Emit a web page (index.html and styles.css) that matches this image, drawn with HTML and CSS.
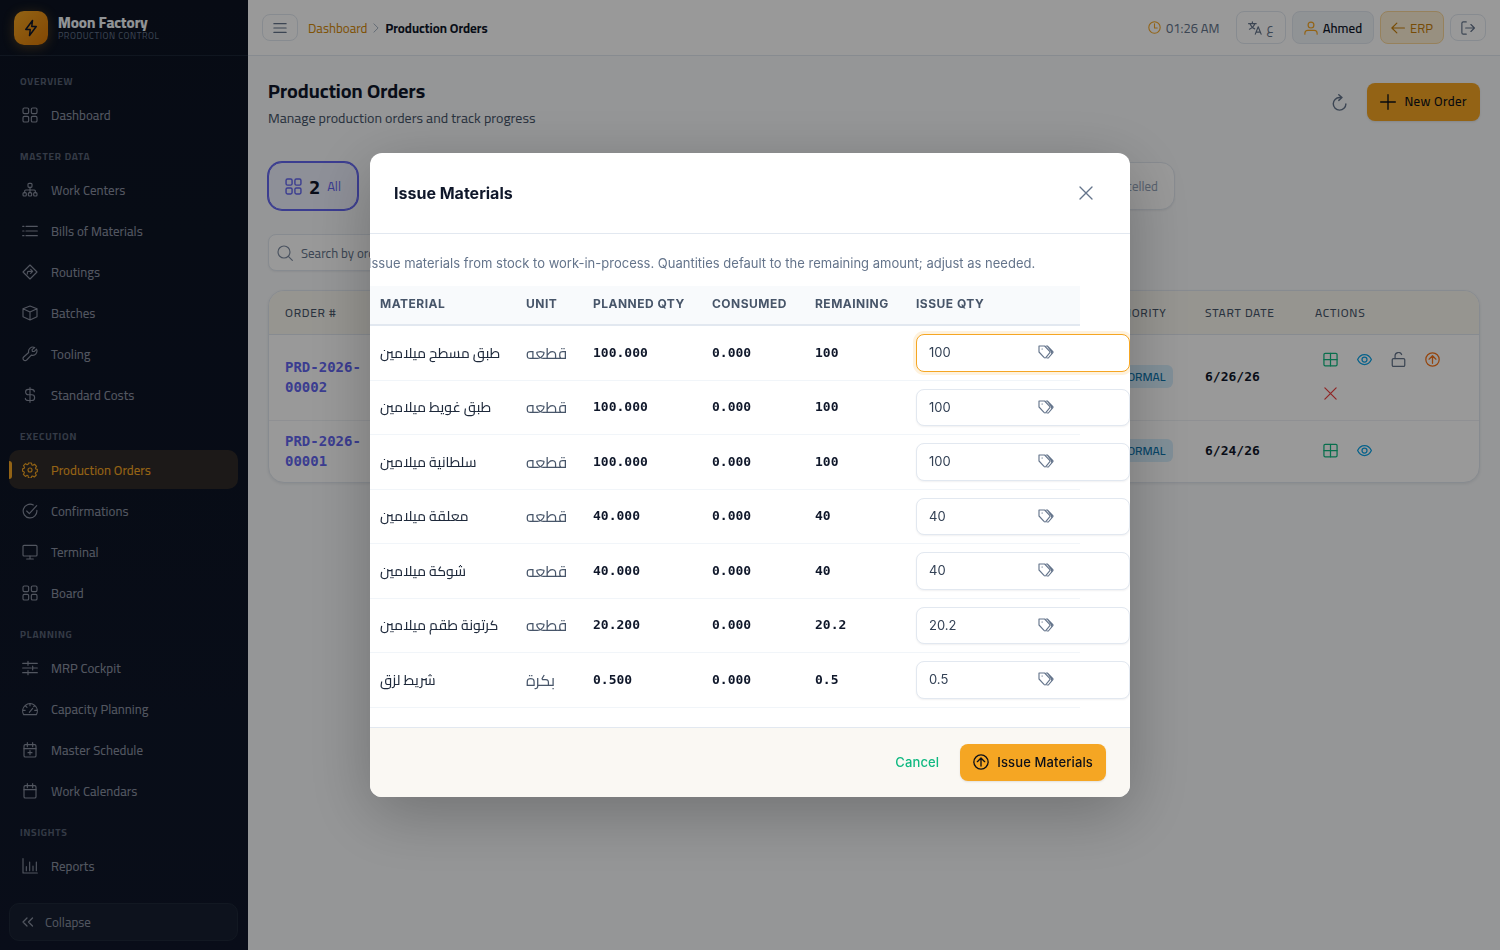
FILE: index.html
```html
<!DOCTYPE html>
<html lang="en">
<head>
    <meta charset="UTF-8">
    <meta name="viewport" content="width=device-width, initial-scale=1.0">
    <title>Production Orders - Moon Factory</title>
    <link rel="stylesheet" href="styles.css">
</head>
<body>
    <!-- Icon sprite -->
    <svg class="sprite" aria-hidden="true">
        <symbol id="i-grid" viewBox="0 0 24 24"><rect x="1.500" y="1.500" width="8.500" height="8.500" rx="2"/><rect x="14" y="1.500" width="8.500" height="8.500" rx="2"/><rect x="1.500" y="14" width="8.500" height="8.500" rx="2"/><rect x="14" y="14" width="8.500" height="8.500" rx="2"/></symbol>
        <symbol id="i-bolt" viewBox="0 0 24 24"><path d="M14 2 5 14h6l-1 8 9-12h-6z"/></symbol>
        <symbol id="i-sitemap" viewBox="0 0 24 24"><rect x="9" y="2" width="6" height="6" rx="1.5"/><path d="M12 8v8M4 16v-2.500q0-1.500 1.500-1.500h13q1.500 0 1.500 1.500V16"/><rect x="1.500" y="16" width="5" height="5" rx="1.500"/><rect x="9.500" y="16" width="5" height="5" rx="1.500"/><rect x="17.500" y="16" width="5" height="5" rx="1.500"/></symbol>
        <symbol id="i-list" viewBox="0 0 24 24"><path d="M6 5h17M6 12h17M6 19h17M1 5h2M1 12h2M1 19h2"/></symbol>
        <symbol id="i-route" viewBox="0 0 24 24"><path d="M12 1.500 22.500 12 12 22.500 1.500 12zM8 15v-2q0-2 2-2h6M13 8l3 3-3 3"/></symbol>
        <symbol id="i-box" viewBox="0 0 24 24"><path d="M12 1.500 22.500 5.500v12L12 22.500 1.500 17.500v-12zM1.500 5.500 12 10.500l10.500-5M12 10.500v12"/></symbol>
        <symbol id="i-wrench" viewBox="0 0 24 24"><path d="M19 2.200a6.500 6.500 0 0 0-9 7.500L2.500 16.500a3 3 0 0 0 0 4.500 3 3 0 0 0 4.500 0l7-7.300a6.500 6.500 0 0 0 7.800-9L18.200 8.300 15.500 8l-.4-2.500z"/></symbol>
        <symbol id="i-dollar" viewBox="0 0 24 24"><path d="M12 1v22M18.500 7c0-2.500-2-3.500-4.500-3.500h-4.500a4 4 0 0 0 0 8.200h5.200a4.200 4.200 0 0 1 0 8.500H9.500C7 20.200 5 19 5 16.800"/></symbol>
        <symbol id="i-cog" viewBox="0 0 24 24"><path d="M9.800 1.500h4.400l.6 2.900 1.500.6 2.500-1.600 3 3.100-1.600 2.500.6 1.500 2.200.5v3.600l-2.400.9-.6 1.500 1.500 2.500-3 3-2.500-1.500-1.500.6-.7 2.400H9.700L9.100 20.600 7.600 20l-2.500 1.600-3-3.100 1.500-2.500L3 14.500.9 13.800v-3.700L3.200 9.500l.6-1.500L2.300 5.500l3-3.100L7.700 4l1.500-.6z"/><circle cx="12" cy="12" r="3"/></symbol>
        <symbol id="i-check" viewBox="0 0 24 24"><path d="M17 3A10.300 10.300 0 1 0 22.300 11M7 12l4 4L22 4"/></symbol>
        <symbol id="i-desktop" viewBox="0 0 24 24"><rect x="1.500" y="2" width="21" height="16" rx="1.500"/><path d="M12 18v4.500M7 22.500h10"/></symbol>
        <symbol id="i-sliders" viewBox="0 0 24 24"><path d="M1 5h7M10 5h13M1 12h13M17 12h6M1 19h7M10 19h13M9 2v6M16 9v6M9 16v6"/></symbol>
        <symbol id="i-gauge" viewBox="0 0 24 24"><path d="M2.500 20.500A11 11 0 1 1 21.500 20.500zM11 17l5-6M12 4v3M1.800 14h3M19 14h3M5.500 7.500l2 2M18.500 7.500l-1 1"/></symbol>
        <symbol id="i-calplus" viewBox="0 0 24 24"><rect x="3" y="4" width="18" height="18.500" rx="2"/><path d="M3 10h18M8 1v6M16 1v6M12 13v6M9 16h6"/></symbol>
        <symbol id="i-cal" viewBox="0 0 24 24"><rect x="3" y="4" width="18" height="18.500" rx="2"/><path d="M3 10h18M8 1v6M16 1v6"/></symbol>
        <symbol id="i-chart" viewBox="0 0 24 24"><path d="M1.500 1v21.500H23M6.500 13v6M11.500 6v13M16.500 12v7M21.500 6v13"/></symbol>
        <symbol id="i-collapse" viewBox="0 0 24 24"><path d="M10 4 2 12l8 8M21 4l-8 8 8 8"/></symbol>
        <symbol id="i-menu" viewBox="0 0 24 24"><path d="M1.500 4.500h21M1.500 12h21M1.500 19.500h21"/></symbol>
        <symbol id="i-right" viewBox="0 0 24 24"><path d="M7 2l10 10-10 10"/></symbol>
        <symbol id="i-clock" viewBox="0 0 24 24"><circle cx="12" cy="12" r="10.500"/><path d="M12 5v8h5"/></symbol>
        <symbol id="i-lang" viewBox="0 0 24 24"><path d="M1 4.500h13M7.500 1.500v3M12 4.500c-1.500 4-5 7.500-9.500 9.500M4 6c1.500 3.500 4 6 7.500 7.500M12.500 22.500l5-12.500 5 12.500M14 19h7"/></symbol>
        <symbol id="i-user" viewBox="0 0 24 24"><circle cx="12" cy="7" r="5"/><path d="M1.500 22.500v-1.500q0-5 5-5h11q5 0 5 5v1.500"/></symbol>
        <symbol id="i-left" viewBox="0 0 24 24"><path d="M23 12H2M10 3.500 1.500 12l8.500 8.500"/></symbol>
        <symbol id="i-logout" viewBox="0 0 24 24"><path d="M9 1.500H4Q1.500 1.500 1.500 4v16q0 2.500 2.500 2.500h5M8 12h14.500M17 6l6 6-6 6"/></symbol>
        <symbol id="i-refresh" viewBox="0 0 24 24"><path d="M14.500 5H12A8.900 8.900 0 1 0 21 14M11 1l4.500 4L11 9"/></symbol>
        <symbol id="i-plus" viewBox="0 0 24 24"><path d="M12 1v22M1 12h22"/></symbol>
        <symbol id="i-search" viewBox="0 0 24 24"><circle cx="10.500" cy="10.500" r="9"/><path d="m17 17 6 6"/></symbol>
        <symbol id="i-table" viewBox="0 0 24 24"><rect x="1.500" y="2" width="21" height="20" rx="2"/><path d="M1.500 12h21M12 2v20"/></symbol>
        <symbol id="i-eye" viewBox="0 0 24 24"><path d="M1 12C3.500 6.500 7.500 4 12 4s8.500 2.500 11 8c-2.500 5.500-6.500 8-11 8s-8.500-2.500-11-8z"/><circle cx="12" cy="12" r="4"/></symbol>
        <symbol id="i-unlock" viewBox="0 0 24 24"><rect x="2" y="10.500" width="20" height="12.500" rx="2"/><path d="M6.500 10.500V6.500a5.500 5.500 0 0 1 10.500-2.500"/></symbol>
        <symbol id="i-up" viewBox="0 0 24 24"><circle cx="12" cy="12" r="10.700"/><path d="M12 18V6.500M6.500 11.500 12 6l5.500 5.500"/></symbol>
        <symbol id="i-times" viewBox="0 0 24 24"><path d="m3 3 18 18M21 3 3 21"/></symbol>
        <symbol id="i-tags" viewBox="0 0 24 24"><path d="M1.500 3h8.500l7.500 8q1 1.200 0 2.400l-5.500 6.600q-1.500 1.500-3 0L1.500 12zM12.500 3h1.500l8 8q1 1.200 0 2.400L15.500 21h-2M15 4.500l5 6.500q1 1.200 0 2.400"/><path d="M6 7.500h.5"/></symbol>
    </svg>

    <div class="app">
        <aside class="sidebar">
            <div class="brand">
                <span class="brand-logo"><svg class="icon"><use href="#i-bolt"/></svg></span>
                <div>
                    <div class="brand-name">Moon Factory</div>
                    <div class="brand-sub">PRODUCTION CONTROL</div>
                </div>
            </div>
            <nav class="nav">
                <h2 class="nav-label">OVERVIEW</h2>
                <a class="nav-item" href="#"><svg class="icon"><use href="#i-grid"/></svg>Dashboard</a>

                <h2 class="nav-label">MASTER DATA</h2>
                <a class="nav-item" href="#"><svg class="icon"><use href="#i-sitemap"/></svg>Work Centers</a>
                <a class="nav-item" href="#"><svg class="icon"><use href="#i-list"/></svg>Bills of Materials</a>
                <a class="nav-item" href="#"><svg class="icon"><use href="#i-route"/></svg>Routings</a>
                <a class="nav-item" href="#"><svg class="icon"><use href="#i-box"/></svg>Batches</a>
                <a class="nav-item" href="#"><svg class="icon"><use href="#i-wrench"/></svg>Tooling</a>
                <a class="nav-item" href="#"><svg class="icon"><use href="#i-dollar"/></svg>Standard Costs</a>

                <h2 class="nav-label">EXECUTION</h2>
                <a class="nav-item active" href="#"><svg class="icon"><use href="#i-cog"/></svg>Production Orders</a>
                <a class="nav-item" href="#"><svg class="icon"><use href="#i-check"/></svg>Confirmations</a>
                <a class="nav-item" href="#"><svg class="icon"><use href="#i-desktop"/></svg>Terminal</a>
                <a class="nav-item" href="#"><svg class="icon"><use href="#i-grid"/></svg>Board</a>

                <h2 class="nav-label">PLANNING</h2>
                <a class="nav-item" href="#"><svg class="icon"><use href="#i-sliders"/></svg>MRP Cockpit</a>
                <a class="nav-item" href="#"><svg class="icon"><use href="#i-gauge"/></svg>Capacity Planning</a>
                <a class="nav-item" href="#"><svg class="icon"><use href="#i-calplus"/></svg>Master Schedule</a>
                <a class="nav-item" href="#"><svg class="icon"><use href="#i-cal"/></svg>Work Calendars</a>

                <h2 class="nav-label">INSIGHTS</h2>
                <a class="nav-item" href="#"><svg class="icon"><use href="#i-chart"/></svg>Reports</a>
            </nav>
            <button class="collapse" type="button"><svg class="icon"><use href="#i-collapse"/></svg>Collapse</button>
        </aside>

        <div class="main">
            <header class="topbar">
                <button class="top-btn small" type="button" aria-label="Menu"><svg class="icon"><use href="#i-menu"/></svg></button>
                <nav class="crumbs">
                    <a href="#">Dashboard</a>
                    <svg class="icon"><use href="#i-right"/></svg>
                    <span>Production Orders</span>
                </nav>
                <div class="top-right">
                    <span class="clock"><svg class="icon"><use href="#i-clock"/></svg>01:26 AM</span>
                    <button class="top-btn lang" type="button"><svg class="icon"><use href="#i-lang"/></svg><span lang="ar">ع</span></button>
                    <button class="top-btn user" type="button"><svg class="icon"><use href="#i-user"/></svg>Ahmed</button>
                    <button class="top-btn erp" type="button"><svg class="icon"><use href="#i-left"/></svg>ERP</button>
                    <button class="top-btn small" type="button" aria-label="Log out"><svg class="icon"><use href="#i-logout"/></svg></button>
                </div>
            </header>

            <main class="content">
                <div class="page-head">
                    <div>
                        <h1>Production Orders</h1>
                        <p>Manage production orders and track progress</p>
                    </div>
                    <div class="page-actions">
                        <button class="icon-btn" type="button" aria-label="Refresh"><svg class="icon"><use href="#i-refresh"/></svg></button>
                        <button class="btn btn-primary" type="button"><svg class="icon"><use href="#i-plus"/></svg>New Order</button>
                    </div>
                </div>

                <div class="stats">
                    <button class="stat selected" type="button"><svg class="icon"><use href="#i-grid"/></svg><b>2</b>All</button>
                    <span class="stat-fill"></span>
                    <button class="stat" type="button"><svg class="icon"><use href="#i-times"/></svg><b>0</b>Cancelled</button>
                </div>

                <div class="search">
                    <svg class="icon"><use href="#i-search"/></svg>
                    <input type="search" placeholder="Search by order" aria-label="Search by order">
                </div>

                <div class="orders">
                    <table>
                        <colgroup><col><col class="col-priority"><col class="col-date"><col class="col-actions"></colgroup>
                        <thead>
                            <tr><th>ORDER #</th><th>PRIORITY</th><th>START DATE</th><th>ACTIONS</th></tr>
                        </thead>
                        <tbody>
                            <tr>
                                <td><a class="order-no" href="#">PRD-2026-<br>00002</a></td>
                                <td><span class="badge">NORMAL</span></td>
                                <td class="date">6/26/26</td>
                                <td>
                                    <div class="row-actions">
                                        <button class="green" type="button" aria-label="Materials"><svg class="icon"><use href="#i-table"/></svg></button>
                                        <button class="sky" type="button" aria-label="View"><svg class="icon"><use href="#i-eye"/></svg></button>
                                        <button class="slate" type="button" aria-label="Unlock"><svg class="icon"><use href="#i-unlock"/></svg></button>
                                        <button class="orange" type="button" aria-label="Issue materials"><svg class="icon"><use href="#i-up"/></svg></button>
                                        <button class="red" type="button" aria-label="Cancel order"><svg class="icon"><use href="#i-times"/></svg></button>
                                    </div>
                                </td>
                            </tr>
                            <tr>
                                <td><a class="order-no" href="#">PRD-2026-<br>00001</a></td>
                                <td><span class="badge">NORMAL</span></td>
                                <td class="date">6/24/26</td>
                                <td>
                                    <div class="row-actions">
                                        <button class="green" type="button" aria-label="Materials"><svg class="icon"><use href="#i-table"/></svg></button>
                                        <button class="sky" type="button" aria-label="View"><svg class="icon"><use href="#i-eye"/></svg></button>
                                    </div>
                                </td>
                            </tr>
                        </tbody>
                    </table>
                </div>
            </main>
        </div>
    </div>

    <!-- Issue materials dialog -->
    <div class="overlay">
        <section class="modal" role="dialog" aria-modal="true" aria-labelledby="modal-title">
            <header class="modal-head">
                <h2 id="modal-title">Issue Materials</h2>
                <button class="icon-btn" type="button" aria-label="Close"><svg class="icon"><use href="#i-times"/></svg></button>
            </header>
            <div class="modal-body">
                <div class="modal-inner">
                    <p>Issue materials from stock to work-in-process. Quantities default to the remaining amount; adjust as needed.</p>
                    <table class="materials">
                        <colgroup><col class="c-material"><col class="c-unit"><col class="c-planned"><col class="c-consumed"><col class="c-remaining"><col></colgroup>
                        <thead>
                            <tr><th>MATERIAL</th><th>UNIT</th><th>PLANNED QTY</th><th>CONSUMED</th><th>REMAINING</th><th>ISSUE QTY</th></tr>
                        </thead>
                        <tbody>
                            <tr>
                                <td class="name" lang="ar">طبق مسطح ميلامين</td><td class="unit" lang="ar">قطعه</td>
                                <td class="num">100.000</td><td class="num">0.000</td><td class="num">100</td>
                                <td><div class="qty focused"><input type="text" value="100" aria-label="Issue qty 1"><svg class="icon"><use href="#i-tags"/></svg></div></td>
                            </tr>
                            <tr>
                                <td class="name" lang="ar">طبق غويط ميلامين</td><td class="unit" lang="ar">قطعه</td>
                                <td class="num">100.000</td><td class="num">0.000</td><td class="num">100</td>
                                <td><div class="qty"><input type="text" value="100" aria-label="Issue qty 2"><svg class="icon"><use href="#i-tags"/></svg></div></td>
                            </tr>
                            <tr>
                                <td class="name" lang="ar">سلطانية ميلامين</td><td class="unit" lang="ar">قطعه</td>
                                <td class="num">100.000</td><td class="num">0.000</td><td class="num">100</td>
                                <td><div class="qty"><input type="text" value="100" aria-label="Issue qty 3"><svg class="icon"><use href="#i-tags"/></svg></div></td>
                            </tr>
                            <tr>
                                <td class="name" lang="ar">معلقة ميلامين</td><td class="unit" lang="ar">قطعه</td>
                                <td class="num">40.000</td><td class="num">0.000</td><td class="num">40</td>
                                <td><div class="qty"><input type="text" value="40" aria-label="Issue qty 4"><svg class="icon"><use href="#i-tags"/></svg></div></td>
                            </tr>
                            <tr>
                                <td class="name" lang="ar">شوكة ميلامين</td><td class="unit" lang="ar">قطعه</td>
                                <td class="num">40.000</td><td class="num">0.000</td><td class="num">40</td>
                                <td><div class="qty"><input type="text" value="40" aria-label="Issue qty 5"><svg class="icon"><use href="#i-tags"/></svg></div></td>
                            </tr>
                            <tr>
                                <td class="name" lang="ar">كرتونة طقم ميلامين</td><td class="unit" lang="ar">قطعه</td>
                                <td class="num">20.200</td><td class="num">0.000</td><td class="num">20.2</td>
                                <td><div class="qty"><input type="text" value="20.2" aria-label="Issue qty 6"><svg class="icon"><use href="#i-tags"/></svg></div></td>
                            </tr>
                            <tr>
                                <td class="name" lang="ar">شريط لزق</td><td class="unit" lang="ar">بكرة</td>
                                <td class="num">0.500</td><td class="num">0.000</td><td class="num">0.5</td>
                                <td><div class="qty"><input type="text" value="0.5" aria-label="Issue qty 7"><svg class="icon"><use href="#i-tags"/></svg></div></td>
                            </tr>
                        </tbody>
                    </table>
                </div>
            </div>
            <footer class="modal-foot">
                <button class="btn btn-text" type="button">Cancel</button>
                <button class="btn btn-primary" type="button"><svg class="icon"><use href="#i-up"/></svg>Issue Materials</button>
            </footer>
        </section>
    </div>
</body>
</html>
```
FILE: styles.css
```css
* {
    margin: 0;
    padding: 0;
    box-sizing: border-box;
}

body {
    font-family: Cairo, Roboto, 'DejaVu Sans', sans-serif;
    font-size: 13px;
    color: #0f172a;
    background: #f8fafc;
}

button,
input {
    font: inherit;
    color: inherit;
}

button {
    display: flex;
    align-items: center;
    justify-content: center;
    border: none;
    background: none;
    cursor: pointer;
}

a {
    color: inherit;
    text-decoration: none;
}

table {
    width: 100%;
    border-collapse: collapse;
    table-layout: fixed;
}

.sprite {
    display: none;
}

.icon {
    width: 16px;
    height: 16px;
    flex-shrink: 0;
    fill: none;
    stroke: currentColor;
    stroke-width: 2;
    stroke-linecap: round;
    stroke-linejoin: round;
}

.app {
    display: flex;
    height: 100vh;
    overflow: hidden;
}

/* Sidebar */
.sidebar {
    width: 248px;
    flex-shrink: 0;
    display: flex;
    flex-direction: column;
    background: linear-gradient(180deg, #0c1322 0%, #0f172a 100%);
    color: #8990a0;
}

.brand {
    height: 56px;
    flex-shrink: 0;
    display: flex;
    align-items: center;
    gap: 10px;
    padding: 0 14px;
    border-bottom: 1px solid #1c2536;
}

.brand-logo {
    width: 34px;
    height: 34px;
    display: flex;
    align-items: center;
    justify-content: center;
    border-radius: 10px;
    background: linear-gradient(135deg, #f5a623, #d97706);
    box-shadow: 0 2px 12px rgba(245, 166, 35, 0.3);
    color: #0f172a;
}

.brand-logo .icon {
    width: 18px;
    height: 18px;
}

.brand-name {
    font-size: 15px;
    line-height: 16px;
    font-weight: 800;
    color: #f1f5f9;
}

.brand-sub {
    font-size: 9px;
    line-height: 10px;
    letter-spacing: 0.06em;
    color: #64748b;
}

.nav {
    flex: 1;
    padding: 3px 10px 0 9px;
    overflow: hidden;
}

.nav-label {
    padding: 15px 11px 5px;
    font-size: 10px;
    line-height: 16px;
    font-weight: 700;
    letter-spacing: 0.08em;
    color: #586275;
}

.nav-item {
    display: flex;
    align-items: center;
    gap: 13px;
    height: 39px;
    padding: 0 13px;
    border-radius: 10px;
    font-weight: 500;
}

.nav-item .icon {
    stroke-width: 1.7;
}

.nav-item + .nav-item {
    margin-top: 2px;
}

.nav-item.active {
    position: relative;
    background: #302b28;
    color: #f5a623;
}

.nav-item.active::before {
    content: "";
    position: absolute;
    left: 0;
    top: 11px;
    width: 3px;
    height: 18px;
    border-radius: 0 3px 3px 0;
    background: #f5a623;
}

.collapse {
    height: 38px;
    justify-content: flex-start;
    gap: 11px;
    margin: 9px 10px 9px 9px;
    padding: 0 12px;
    border: 1px solid #1f2839;
    border-radius: 10px;
    background: #161f31;
}

.collapse .icon {
    width: 12px;
    height: 12px;
    stroke-width: 2.5;
}

/* Top bar */
.main {
    flex: 1;
    min-width: 0;
}

.topbar {
    height: 56px;
    display: flex;
    align-items: center;
    gap: 10px;
    padding: 0 14px;
    background: #fff;
    border-bottom: 1px solid #e2e8f0;
}

.top-btn {
    height: 33px;
    gap: 5px;
    padding: 0 11px;
    border: 1px solid #e2e8f0;
    border-radius: 8px;
    color: #64748b;
}

.top-btn .icon {
    width: 14px;
    height: 14px;
}

.top-btn.small {
    width: 36px;
    height: 27px;
    padding: 0;
}

.top-btn.user {
    background: #f1f5f9;
    color: #0f172a;
    font-weight: 600;
}

.top-btn.user .icon {
    color: #f5a623;
}

.top-btn.erp {
    background: #fef0d6;
    border-color: #fbd799;
    color: #c77f0a;
    padding: 0 10px;
}

.crumbs {
    display: flex;
    align-items: center;
    gap: 4px;
    font-weight: 700;
}

.crumbs a {
    color: #d48a0a;
    font-weight: 400;
}

.crumbs .icon {
    width: 10px;
    height: 10px;
    color: #94a3b8;
}

.top-right {
    display: flex;
    align-items: center;
    gap: 6px;
    margin-left: auto;
}

.clock {
    display: flex;
    align-items: center;
    gap: 5px;
    margin-right: 10px;
    color: #64748b;
}

.clock .icon {
    width: 13px;
    height: 13px;
    color: #f5a623;
}

/* Page */
.content {
    padding: 20px;
}

.page-head {
    display: flex;
    align-items: center;
    justify-content: space-between;
    margin-bottom: 34px;
}

.page-head h1 {
    font-size: 20px;
    line-height: 30px;
    font-weight: 700;
}

.page-head p {
    margin-top: 2px;
    font-size: 14px;
    line-height: 20px;
    color: #475569;
}

.page-actions {
    display: flex;
    align-items: center;
    gap: 10px;
}

.icon-btn {
    width: 36px;
    height: 36px;
    color: #64748b;
}

.page-actions .icon-btn .icon {
    width: 17px;
    height: 17px;
}

.btn {
    gap: 8px;
    padding: 9px 13px;
    border-radius: 8px;
    line-height: 1.5;
    font-weight: 500;
    letter-spacing: 0.01em;
}

.btn-primary {
    background: #f5a623;
    color: #0b0f19;
    box-shadow: 0 1px 2px rgba(15, 23, 42, 0.1);
}

.page-actions .btn {
    letter-spacing: 0.03em;
}

.stats {
    max-width: 907px;
    display: flex;
    margin-bottom: 24px;
}

.stat-fill {
    flex: 1;
}

.stat {
    height: 48px;
    gap: 7px;
    padding: 0 16px;
    border: 1px solid #e2e8f0;
    border-radius: 14px;
    background: #fff;
    color: #94a3b8;
    box-shadow: 0 1px 2px rgba(15, 23, 42, 0.06);
}

.stat .icon {
    width: 17px;
    height: 17px;
}

.stat b {
    font-size: 20px;
    color: #0f172a;
}

.stat.selected {
    border-color: #6366f1;
    background: #edf0fe;
    color: #6366f1;
    box-shadow: 0 0 0 1px #6366f1;
}

.search {
    width: 320px;
    height: 37px;
    display: flex;
    align-items: center;
    gap: 8px;
    margin-bottom: 19px;
    padding: 0 8px;
    border: 1px solid #e2e8f0;
    border-radius: 8px;
    background: #fff;
    color: #64748b;
    box-shadow: 0 1px 2px rgba(15, 23, 42, 0.06);
}

.search .icon {
    stroke-width: 1.7;
    color: #7d8ba1;
}

.search input {
    flex: 1;
    min-width: 0;
    border: none;
    outline: none;
    background: none;
}

.search input::placeholder {
    color: #64748b;
}

.orders {
    border: 1px solid #e2e8f0;
    border-radius: 16px;
    background: #fff;
    overflow: hidden;
    box-shadow: 0 1px 3px rgba(15, 23, 42, 0.08);
}

.orders th {
    height: 43px;
    padding: 0 16px;
    text-align: left;
    font-size: 12px;
    font-weight: 500;
    letter-spacing: 0.06em;
    color: #475569;
    background: #faf8f1;
    border-bottom: 1px solid #e2e8f0;
}

.orders td {
    padding: 10px 16px 11px;
    border-bottom: 1px solid #eef1f5;
}

.orders tr:last-child td {
    border-bottom: none;
}

.col-priority {
    width: 93px;
}

.col-date {
    width: 110px;
}

.col-actions {
    width: 180px;
}

.order-no {
    display: block;
    font: 700 14px/20px 'DejaVu Sans Mono', monospace;
    color: #6366f1;
}

.orders .date {
    font: 700 13px/20px 'DejaVu Sans Mono', monospace;
}

.badge {
    display: block;
    width: max-content;
    padding: 0 7px;
    border-radius: 6px;
    line-height: 23px;
    font-size: 12px;
    font-weight: 600;
    background: #d7effd;
    color: #0b74ad;
}

.row-actions {
    display: flex;
    flex-wrap: wrap;
    gap: 4px;
}

.row-actions button {
    width: 30px;
    height: 30px;
}

.row-actions .icon {
    width: 15px;
    height: 15px;
}

.green { color: #10b981; }
.sky { color: #0ea5e9; }
.slate { color: #64748b; }
.orange { color: #f97316; }
.red { color: #ef4444; }

/* Dialog */
.overlay {
    position: fixed;
    inset: 0;
    display: flex;
    align-items: center;
    justify-content: center;
    background: rgba(0, 0, 0, 0.4);
}

.modal {
    width: 760px;
    max-width: 92vw;
    border-radius: 12px;
    background: #fff;
    overflow: hidden;
    font-family: Inter, Cairo, 'DejaVu Sans', sans-serif;
    box-shadow: 0 16px 64px rgba(0, 0, 0, 0.25);
}

.modal-head {
    display: flex;
    align-items: center;
    justify-content: space-between;
    padding: 22px 26px 22px 24px;
    border-bottom: 1px solid #e2e8f0;
}

.modal-head h2 {
    font-size: 16px;
    font-weight: 700;
}

.modal-body {
    padding: 19px 50px 19px 0;
    overflow: hidden;
}

.modal-inner {
    margin-left: -2px;
}

.modal-inner p {
    margin-bottom: 13px;
    line-height: 20px;
    color: #64748b;
    white-space: nowrap;
}

.materials th {
    height: 39px;
    padding: 0 12px 4px;
    text-align: left;
    font-size: 12px;
    font-weight: 700;
    letter-spacing: 0.04em;
    white-space: nowrap;
    color: #475569;
    background: #f8fafc;
    border-bottom: 2px solid #e2e8f0;
}

.materials td {
    padding: 8px 12px;
    border-bottom: 1px solid #f1f5f9;
    white-space: nowrap;
}

.c-material { width: 146px; }
.c-unit { width: 67px; }
.c-planned { width: 119px; }
.c-consumed { width: 103px; }
.c-remaining { width: 101px; }

.materials .name {
    font: 500 14px/20px Cairo, 'DejaVu Sans', sans-serif;
    color: #1e293b;
}

.materials .unit {
    font: 400 16px/20px Cairo, 'DejaVu Sans', sans-serif;
    color: #475569;
}

.materials .num {
    font: 700 13px/20px 'DejaVu Sans Mono', monospace;
}

.qty {
    position: relative;
    width: 150px;
}

.qty input {
    display: block;
    width: 214px;
    padding: 8px 12px;
    border: 1px solid #e2e8f0;
    border-radius: 8px;
    outline: none;
    background: #fff;
    line-height: 1.5;
    color: #334155;
    box-shadow: 0 1px 2px rgba(15, 23, 42, 0.06);
}

.qty.focused input {
    border-color: #f5a623;
    box-shadow: 0 0 0 3px rgba(245, 166, 35, 0.15);
}

.qty .icon {
    position: absolute;
    right: 12px;
    top: 10px;
    stroke-width: 1.7;
    color: #64748b;
}

.modal-foot {
    display: flex;
    align-items: center;
    justify-content: flex-end;
    gap: 8px;
    padding: 16px 24px;
    border-top: 1px solid #e2e8f0;
    background: #faf8f3;
}

.btn-text {
    color: #10b981;
}
```
